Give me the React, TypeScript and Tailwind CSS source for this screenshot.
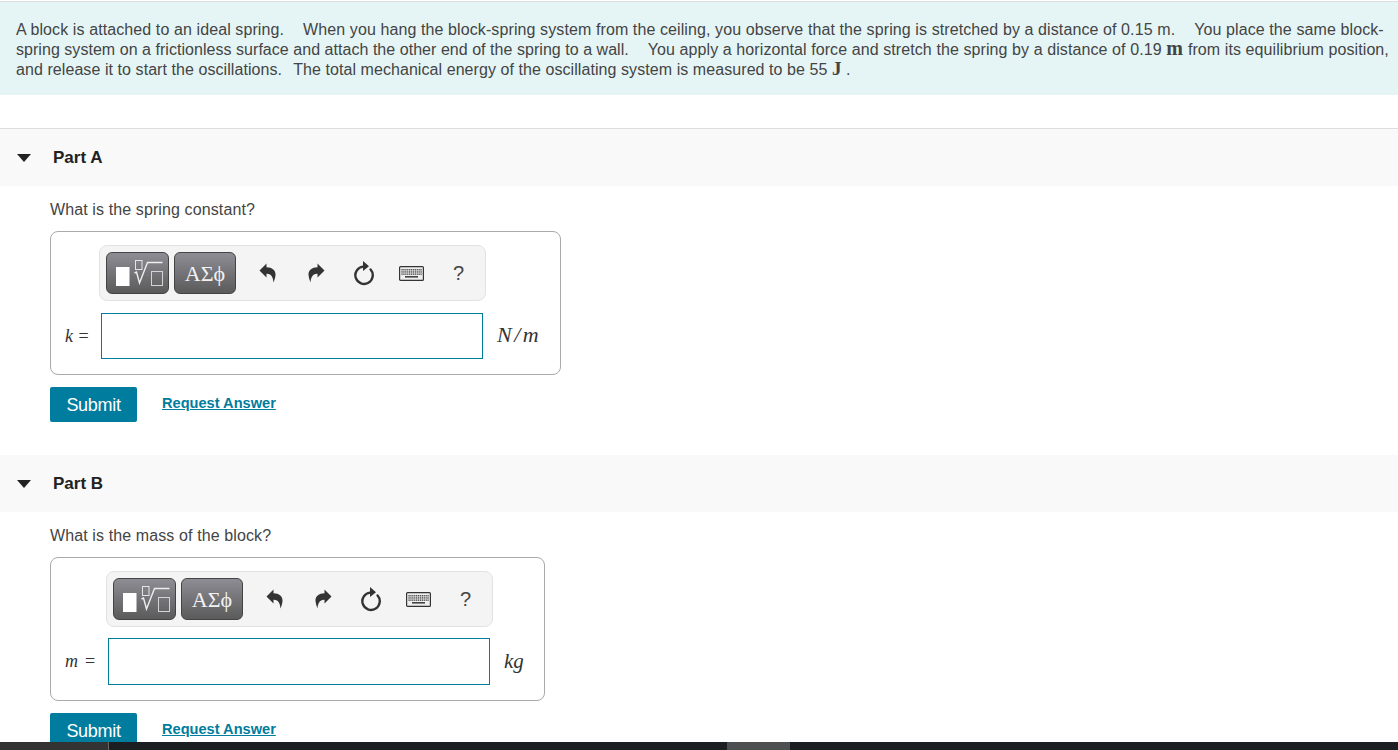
import React from "react";

const sans = "font-['Liberation_Sans',Arial,sans-serif]";
const serif = "font-['Liberation_Serif','Times_New_Roman',serif]";

// Curved arrow used for undo, the redo one is the same path mirrored
function ArrowIcon({ flip }: { flip?: boolean }) {
  return (
    <svg
      width="18"
      height="20"
      viewBox="0 0 18 20"
      className={flip ? "-scale-x-100" : ""}
      fill="#333"
    >
      <path d="M0.5 7.5 L7.5 0.5 L7.5 4.2 C13 4.2 17 7.5 16.5 12 C16.3 14.5 15.5 17 14.5 19.5 C14.2 15 12.5 10.5 7.5 10.8 L7.5 14.5 Z" />
    </svg>
  );
}

function ResetIcon() {
  return (
    <svg width="24" height="26" viewBox="0 0 24 26" fill="none">
      <path
        d="M18.6 9.5 A8.7 8.7 0 1 1 11 6.6"
        stroke="#333"
        strokeWidth="2.4"
        strokeLinecap="round"
      />
      <path d="M11 1 L17 6.2 L11 11 Z" fill="#333" />
    </svg>
  );
}

function KeyboardIcon() {
  const keys = [];
  for (let row = 0; row < 3; row++) {
    for (let col = 0; col < 11; col++) {
      keys.push(
        <rect
          key={`${row}-${col}`}
          x={2.4 + col * 1.9}
          y={3 + row * 2.2}
          width="1.3"
          height="1.5"
          fill="#555"
        />
      );
    }
  }
  return (
    <svg width="25" height="15" viewBox="0 0 25 15">
      <rect x="0.6" y="0.6" width="23.8" height="13.8" rx="1" fill="#eee" stroke="#333" strokeWidth="1.2" />
      {keys}
      <rect x="6" y="10" width="13" height="1.6" fill="#444" />
    </svg>
  );
}

function TemplateIcon() {
  return (
    <svg width="50" height="34" viewBox="0 0 50 34" fill="none">
      <rect x="3" y="11" width="13.5" height="19" fill="#fff" />
      <rect x="22.5" y="4.5" width="6.5" height="9" stroke="#e4e4e4" />
      <path d="M21.5 17 L23.5 16 L26.5 27 L34.5 6.5 L49.5 6.5" stroke="#eee" strokeWidth="1.4" />
      <rect x="38.5" y="15.5" width="11" height="14" stroke="#d4d4d4" />
    </svg>
  );
}

function Toolbar() {
  return (
    <div className="flex h-14 w-[387px] items-center rounded-lg border border-[#e2e2e2] bg-[#f4f4f4] pl-[6px]">
      <div className="flex h-[42px] w-[63px] items-center justify-center rounded-md border border-[#444] bg-linear-to-b from-[#8e8d95] to-[#5b5b5b]">
        <TemplateIcon />
      </div>
      <div
        className={`ml-[5px] flex h-[42px] w-[62px] items-center justify-center rounded-md border border-[#444] bg-linear-to-b from-[#8e8d95] to-[#5b5b5b] text-[22px] text-[#f2f2f2] ${serif}`}
      >
        ΑΣϕ
      </div>
      <div className="ml-[23px] flex w-[18px] justify-center">
        <ArrowIcon />
      </div>
      <div className="ml-[30px] flex w-[18px] justify-center">
        <ArrowIcon flip />
      </div>
      <div className="ml-[27px] flex w-6 justify-center">
        <ResetIcon />
      </div>
      <div className="ml-[23px] flex w-[25px] justify-center">
        <KeyboardIcon />
      </div>
      <div className={`ml-[29px] text-xl text-[#444] ${sans}`}>?</div>
    </div>
  );
}

interface PartProps {
  title: string;
  question: string;
  symbol: string;
  unit: string;
  boxWidth: string;
  toolbarInset: string;
  labelWidth: string;
  symbolClass: string;
  inputHeight: string;
  inputGap: string;
  unitClass: string;
}

function Part({ title, question, symbol, unit, boxWidth, toolbarInset, labelWidth, symbolClass, inputHeight, inputGap, unitClass }: PartProps) {
  return (
    <section>
      <div className="flex h-[57px] items-center bg-[#f9f9f9]">
        <svg width="14" height="8" viewBox="0 0 14 8" className="ml-[17px]">
          <path d="M0 0 H14 L7 8 Z" fill="#222" />
        </svg>
        <h2 className="ml-[22px] text-[17px] font-bold text-[#222]">{title}</h2>
      </div>
      <div className="pl-[50px]">
        <p className="mt-3 h-6 text-base leading-6 tracking-[0.11px] text-[#444]">{question}</p>
        <div className={`mt-[9px] h-[144px] rounded-lg border border-[#aaa] pt-[13px] ${boxWidth}`}>
          <div className={toolbarInset}>
            <Toolbar />
          </div>
          <div className={`flex items-center ${inputGap}`}>
            <span className={`ml-[14px] shrink-0 text-[18px] text-[#333] ${serif} ${labelWidth}`}>
              <i className={symbolClass}>{symbol}</i> =
            </span>
            <div className={`w-[382px] border border-[#007c9e] bg-white ${inputHeight}`} />
            <span className={`ml-[14px] italic text-[#333] ${serif} ${unitClass}`}>{unit}</span>
          </div>
        </div>
        <div className="mt-3 flex items-center">
          <button className="h-[35px] w-[87px] rounded-xs bg-[#007c9e] text-lg tracking-[-0.3px] text-white">
            Submit
          </button>
          <a className="ml-[25px] -translate-y-px text-[14.6px] font-bold text-[#007c9e] underline">Request Answer</a>
        </div>
      </div>
    </section>
  );
}

function Gap() {
  return <span className="inline-block w-[19px]" />;
}

export default function App() {
  return (
    <div className={`flex h-[750px] flex-col overflow-hidden bg-white ${sans}`}>
      <div className="min-h-0 flex-1 overflow-hidden">
        <div className="mt-px h-[94px] border-t border-[#ddd] bg-[#e5f5f6] px-4 pt-[18px] text-base leading-5 text-[#444]">
          <p className="h-5 whitespace-nowrap tracking-[0.1px]">
            A block is attached to an ideal spring.
            <Gap />
            When you hang the block-spring system from the ceiling, you observe that the spring is stretched by a distance of 0.15 m.
            <Gap />
            You place the same block-
          </p>
          <p className="h-5 whitespace-nowrap tracking-[0.04px]">
            spring system on a frictionless surface and attach the other end of the spring to a wall.
            <Gap />
            <span className="tracking-[0.09px]">
              You apply a horizontal force and stretch the spring by a distance of 0.19{" "}
              <b className={`text-[20px] leading-[0] tracking-[0.5px] ${serif}`}>m</b> from its equilibrium position,
            </span>
          </p>
          <p className="h-5 whitespace-nowrap tracking-[0.07px]">
            and release it to start the oscillations.
            <span className="inline-block w-[11px]" />
            The total mechanical energy of the oscillating system is measured to be 55{" "}
            <b className={`text-[19px] leading-[0] ${serif}`}>J</b> .
          </p>
        </div>
        <div className="mt-[33px] border-t border-[#ddd]">
          <Part
            title="Part A"
            question="What is the spring constant?"
            symbol="k"
            unit="N/m"
            boxWidth="w-[511px]"
            toolbarInset="pl-12"
            labelWidth="w-[36px]"
            symbolClass="tracking-[1px]"
            inputHeight="h-[46px]"
            inputGap="mt-3"
            unitClass="-translate-y-0.5 text-[22px] tracking-[2.5px]"
          />
        </div>
        <div className="mt-[33px]">
          <Part
            title="Part B"
            question="What is the mass of the block?"
            symbol="m"
            unit="kg"
            boxWidth="w-[495px]"
            toolbarInset="pl-[55px]"
            labelWidth="w-[43px]"
            symbolClass="tracking-[2.5px]"
            inputHeight="h-[47px]"
            inputGap="mt-[11px]"
            unitClass="text-[21px]"
          />
        </div>
      </div>
      <div className="flex h-2 shrink-0 bg-[#1c1f22]">
        <div className="w-[109px] border-r border-[#666] bg-[#333]" />
        <div className="ml-[618px] w-[63px] bg-[#4d4f51]" />
      </div>
    </div>
  );
}
